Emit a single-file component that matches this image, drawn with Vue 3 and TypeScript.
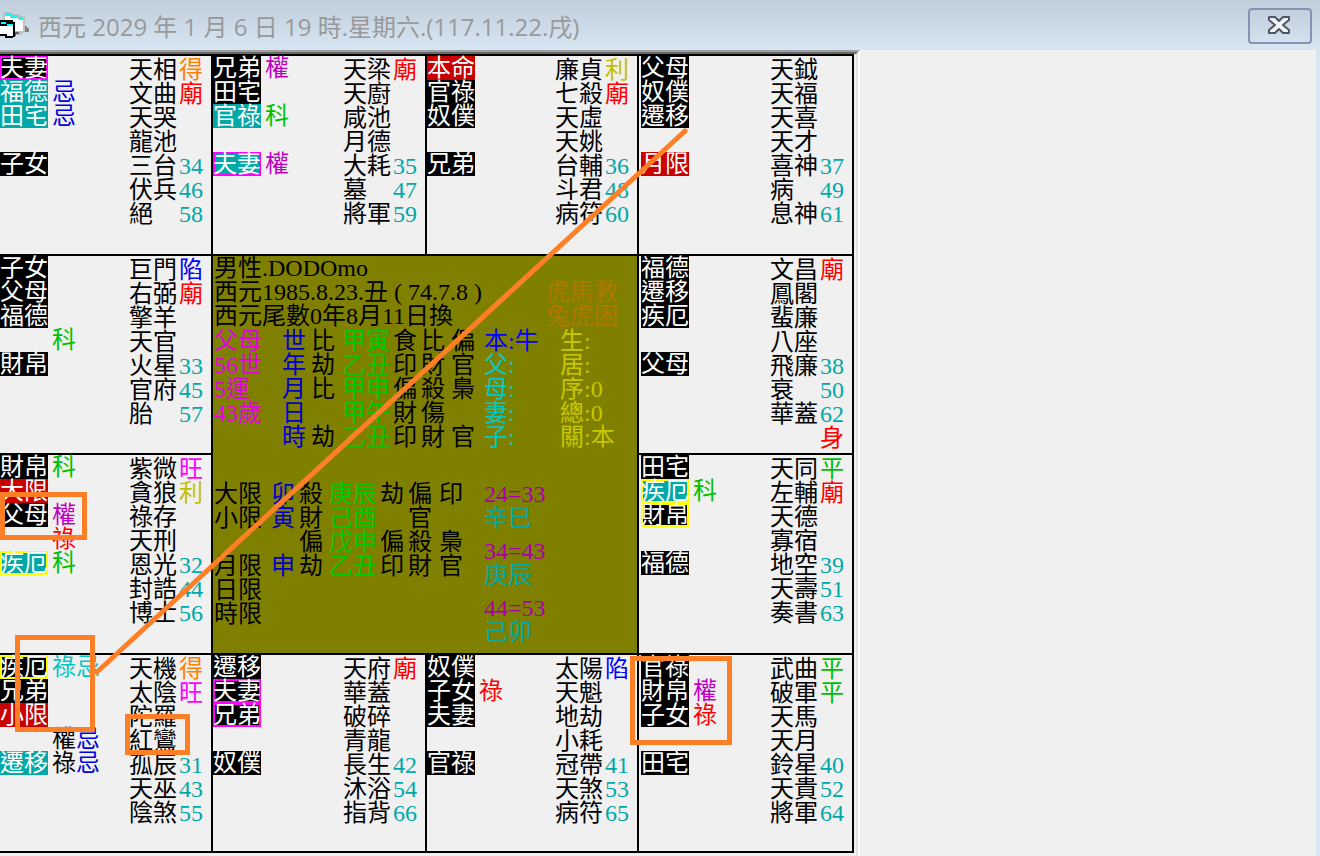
<script setup lang="ts">
interface Mark { text: string; tone: string }
interface Row { tag?: string; kind?: string; marks?: Mark[]; star?: string; note?: string; tone?: string }
interface Palace { area: string; rows: Row[] }

// tag spec: "text|kind", marks spec: "text:tone,text:tone", star spec: "star|note|tone"
function palace(area: string, tags: string[], marks: string[], stars: string[]): Palace {
  const rows: Row[] = []
  for (let i = 0; i < 8; i++) {
    const [tag, kind] = (tags[i] || '').split('|')
    const [star, note, tone] = (stars[i] || '').split('|')
    const list = (marks[i] || '').split(',').filter(Boolean).map((m) => {
      const [text, t] = m.split(':')
      return { text, tone: t }
    })
    rows.push({ tag, kind: kind || 'plain', marks: list, star, note, tone: tone || 'age' })
  }
  return { area, rows }
}

const palaces: Palace[] = [
  palace('a', ['夫妻|plain pink', '福德|teal', '田宅|teal', '', '子女'], ['', '忌:navy', '忌:navy'],
    ['天相|得|orange', '文曲|廟|red', '天哭', '龍池', '三台|34', '伏兵|46', '絕|58']),
  palace('b', ['兄弟', '田宅', '官祿|teal', '', '夫妻|teal pink'], ['權:purple', '', '科:green', '', '權:purple'],
    ['天梁|廟|red', '天廚', '咸池', '月德', '大耗|35', '墓|47', '將軍|59']),
  palace('c', ['本命|crimson', '官祿', '奴僕', '', '兄弟'], [],
    ['廉貞|利|yellow', '七殺|廟|red', '天虛', '天姚', '台輔|36', '斗君|48', '病符|60']),
  palace('d', ['父母', '奴僕', '遷移', '', '月限|crimson'], [],
    ['天鉞', '天福', '天喜', '天才', '喜神|37', '病|49', '息神|61']),
  palace('e', ['子女', '父母', '福德', '', '財帛'], ['', '', '', '科:green'],
    ['巨門|陷|blue', '右弼|廟|red', '擎羊', '天官', '火星|33', '官府|45', '胎|57']),
  palace('f', ['福德', '遷移', '疾厄', '', '父母'], [],
    ['文昌|廟|red', '鳳閣', '蜚廉', '八座', '飛廉|38', '衰|50', '華蓋|62', '|身|red']),
  palace('g', ['財帛', '大限|crimson', '父母', '', '疾厄|teal gold'], ['科:green', '', '權:purple', '祿:red', '科:green'],
    ['紫微|旺|magenta', '貪狼|利|yellow', '祿存', '天刑', '恩光|32', '封誥|44', '博士|56']),
  palace('h', ['田宅', '疾厄|teal gold', '財帛|plain gold', '', '福德'], ['', '科:green'],
    ['天同|平|green', '左輔|廟|red', '天德', '寡宿', '地空|39', '天壽|51', '奏書|63']),
  palace('i', ['疾厄|plain gold', '兄弟', '小限|crimson', '', '遷移|teal'],
    ['祿:cyan,忌:cyan', '', '', '權:black,忌:navy', '祿:black,忌:navy'],
    ['天機|得|orange', '太陰|旺|magenta', '陀羅', '紅鸞', '孤辰|31', '天巫|43', '陰煞|55']),
  palace('j', ['遷移', '夫妻|plain pink', '兄弟|plain pink', '', '奴僕'], [],
    ['天府|廟|red', '華蓋', '破碎', '青龍', '長生|42', '沐浴|54', '指背|66']),
  palace('k', ['奴僕', '子女', '夫妻', '', '官祿'], ['', '祿:red'],
    ['太陽|陷|blue', '天魁', '地劫', '小耗', '冠帶|41', '天煞|53', '病符|65']),
  palace('l', ['官祿', '財帛', '子女', '', '田宅'], ['', '權:purple', '祿:red'],
    ['武曲|平|green', '破軍|平|green', '天馬', '天月', '鈴星|40', '天貴|52', '將軍|64']),
]

const pillarTones = ['fuchsia', 'deep', 'black', 'lime', 'black', 'black', 'black', 'cyan', 'lemon']
const pillars: string[][] = [
  ['父母', '世', '比', '甲寅', '食', '比', '偏', '本:牛', '生:'],
  ['56世', '年', '劫', '乙丑', '印', '財', '官', '父:', '居:'],
  ['5運', '月', '比', '甲申', '偏', '殺', '梟', '母:', '序:0'],
  ['43歲', '日', '', '甲午', '財', '傷', '', '妻:', '總:0'],
  ['', '時', '劫', '乙丑', '印', '財', '官', '子:', '關:本'],
]

const limitTones = ['black', 'deep', 'black', 'lime', 'black', 'black', 'black']
const limits: string[][] = [
  ['大限', '卯', '殺', '庚辰', '劫', '偏', '印'],
  ['小限', '寅', '財', '己酉', '', '官', ''],
  ['', '', '偏', '戊申', '偏', '殺', '梟'],
  ['月限', '申', '劫', '乙丑', '印', '財', '官'],
  ['日限', '', '', '', '', '', ''],
  ['時限', '', '', '', '', '', ''],
]

const decades = [
  { range: '24=33', stem: '辛巳' },
  { range: '34=43', stem: '庚辰' },
  { range: '44=53', stem: '己卯' },
]
</script>

<template>
  <div class="window" lang="zh-Hant">
    <header class="titlebar">
      <svg class="app-icon" width="30" height="28" viewBox="0 0 30 28" aria-hidden="true">
        <path d="M3 0h9v2h8v2h5v17h-3v2h-7V8H3z" fill="#c0c0c0" />
        <path d="M5 4h5v2h8v2h5v11h-8V9H5z" fill="#fff" />
        <path d="M5 1h6v2h7v2h5v3h-4V6h-8V4H5z" fill="#00ffff" />
        <path d="M14 20h5v2h-3v2h-2z" fill="#606060" />
        <path d="M25 14h2v2h2v4h-4z" fill="#808080" />
        <path d="M0 8h13v2h2v15h-2v1H5v-2H0z" fill="#000" />
        <path d="M0 14h13v10H7v-2H0z" fill="#fff" />
        <path d="M1 10h5v2h7v2H7v-2H1z" fill="#00ffff" />
      </svg>
      <h1 class="title">西元 2029 年 1 月 6 日 19 時.星期六.(117.11.22.戌)</h1>
      <button class="close" type="button" aria-label="Close">
        <svg width="24" height="20" viewBox="0 0 24 20" aria-hidden="true">
          <path d="M2 2h6l4 4 4-4h6v3l-6 5 6 5v3h-6l-4-4-4 4H2v-3l6-5-6-5z" fill="#f2f2f2" stroke="#50566a" stroke-width="2" stroke-linejoin="round" />
        </svg>
      </button>
    </header>

    <main class="client">
      <div class="panel">
        <div class="board">
          <section v-for="p in palaces" :key="p.area" class="palace" :class="'at-' + p.area">
            <div v-for="(r, i) in p.rows" :key="i" class="row">
              <span v-if="r.tag" class="tag" :class="r.kind">{{ r.tag }}</span>
              <span v-else class="tag-gap"></span>
              <span class="marks"><span v-for="(m, k) in r.marks" :key="k" :class="m.tone">{{ m.text }}</span></span>
              <span class="star">{{ r.star }}</span>
              <span class="note" :class="r.tone">{{ r.note }}</span>
            </div>
          </section>

          <section class="center">
            <div class="intro">
              <div>
                <p>男性.DODOmo</p>
                <p>西元1985.8.23.丑 ( 74.7.8 )</p>
                <p>西元尾數0年8月11日換</p>
              </div>
              <div class="verse">
                <p>虎馬救</p>
                <p>兔虎困</p>
              </div>
            </div>
            <div class="pillars">
              <template v-for="(line, i) in pillars" :key="i">
                <span v-for="(cell, k) in line" :key="k" :class="i === 0 && k === 7 ? 'blue' : pillarTones[k]">{{ cell }}</span>
              </template>
            </div>
            <div class="lower">
              <div class="limits">
                <template v-for="(line, i) in limits" :key="i">
                  <span v-for="(cell, k) in line" :key="k" :class="limitTones[k]">{{ cell }}</span>
                </template>
              </div>
              <div class="decades">
                <div v-for="d in decades" :key="d.range">
                  <p class="plum">{{ d.range }}</p>
                  <p class="age">{{ d.stem }}</p>
                </div>
              </div>
            </div>
          </section>
        </div>
      </div>
    </main>

    <svg class="notes" viewBox="0 0 1320 856" preserveAspectRatio="none" aria-hidden="true">
      <g fill="#ff7f27" fill-rule="evenodd">
        <path d="M0 492h87v48H0zM5 497v38h77v-38z" />
        <path d="M15 635h80v97H15zM20 640v87h70v-87z" />
        <path d="M125 714h65v41h-65zM130 719v31h55v-31z" />
        <path d="M630 656h102v89H630zM635 661v79h92v-79z" />
      </g>
      <path d="M685 131L97 672" stroke="#ff7f27" stroke-width="5" stroke-linecap="round" />
    </svg>
  </div>
</template>

<style>
body { margin: 0; background: #f0f0f0; }
</style>

<style scoped>
.window {
  position: relative;
  display: flex;
  flex-direction: column;
  min-height: 100vh;
  box-sizing: border-box;
  background: #f0f0f0;
  color: #000;
  font-family: "Liberation Serif", "Noto Sans CJK TC", serif;
  font-size: 24px;
  line-height: 24px;
}
p { margin: 0; white-space: pre; }
.titlebar {
  display: flex;
  align-items: center;
  height: 50px;
  padding: 2px 8px 0 0;
  box-sizing: border-box;
  background: linear-gradient(#c0cedc, #d8e6f3);
}
.app-icon { flex: none; }
.title {
  flex: 1;
  margin: 0 0 0 8px;
  padding-top: 2px;
  color: #999;
  font: 400 24px/32px "Open Sans", "Noto Sans CJK TC", sans-serif;
  white-space: nowrap;
}
.close {
  display: flex;
  align-items: center;
  justify-content: center;
  width: 64px;
  height: 36px;
  padding: 0 2px 2px 0;
  border: 2px solid #8892b2;
  border-radius: 4px;
  background: linear-gradient(#c2d0de, #d3e0ed);
}
.client {
  flex: 1;
  display: grid;
  grid-template-columns: 215fr 114fr;
  border-right: 4px solid #d7e4f2;
}
.panel {
  display: flex;
  border-top: 2px solid #a0a0a0;
  border-right: 2px solid #fff;
}
.board {
  flex: 1;
  display: grid;
  grid-template-columns: 213fr 214fr 212fr 215fr;
  grid-template-rows: 202fr 199fr 200fr 198fr;
  grid-template-areas: "a b c d" "e m m f" "g m m h" "i j k l";
  padding: 0 2px 3px 0;
  border-top: 2px solid #696969;
  border-right: 2px solid #e3e3e3;
}
.board::before {
  content: "";
  grid-area: 1 / 1 / 2 / 5;
  align-self: start;
  height: 2px;
  background: #000;
}
.palace {
  box-sizing: border-box;
  border-right: 2px solid #000;
  border-bottom: 2px solid #000;
}
.at-a { grid-area: a; } .at-b { grid-area: b; } .at-c { grid-area: c; } .at-d { grid-area: d; }
.at-e { grid-area: e; } .at-f { grid-area: f; } .at-g { grid-area: g; } .at-h { grid-area: h; }
.at-i { grid-area: i; } .at-j { grid-area: j; } .at-k { grid-area: k; } .at-l { grid-area: l; }
.at-a, .at-b, .at-c, .at-d { padding-top: 2px; }
.at-d, .at-f, .at-h, .at-l { padding-left: 2px; }
.row {
  display: flex;
  height: 24px;
  padding-right: 8px;
  white-space: nowrap;
}
.tag, .tag-gap { flex: none; width: 48px; height: 24px; }
.tag { color: #fff; }
.plain { background: #000; }
.teal { background: #00a8a8; }
.crimson { background: #c80000; }
.pink { box-shadow: inset 0 0 0 2px #ff00ff; }
.gold { box-shadow: inset 0 0 0 2px #ffff00; }
.marks { flex: 1; padding-left: 4px; }
.star { width: 48px; padding-top: 2px; }
.note { width: 24px; margin-left: 2px; padding-top: 2px; }
.center {
  grid-area: m;
  box-sizing: border-box;
  padding-left: 1px;
  border-right: 2px solid #000;
  border-bottom: 2px solid #000;
  background: #808000;
}
.intro { display: flex; justify-content: space-between; }
.verse { padding: 24px 19px 0 0; color: #b07800; }
.pillars, .limits { display: grid; grid-auto-rows: 24px; white-space: nowrap; }
.pillars { padding-top: 1px; grid-template-columns: 68px 29px 31px 51px 28px 30px 33px 76px 1fr; }
.lower { display: flex; padding-top: 33px; }
.limits { grid-template-columns: 57px 28px 30px 51px 28px 31px 45px; }
.decades { display: flex; flex-direction: column; gap: 9px; }
.black { color: #000; }
.red { color: #ff0000; }
.orange { color: #ff8000; }
.yellow { color: #c0c000; }
.green { color: #00c000; }
.blue { color: #0000ff; }
.navy { color: #0000e0; }
.deep { color: #0000c8; }
.purple { color: #c000c0; }
.magenta { color: #ff00ff; }
.fuchsia { color: #e000e0; }
.plum { color: #a800a8; }
.cyan { color: #00c8c8; }
.lime { color: #00c800; }
.lemon { color: #c8c800; }
.age { color: #00a8a8; }
.notes {
  position: absolute;
  inset: 0;
  width: 100%;
  height: 100%;
  pointer-events: none;
}
</style>
